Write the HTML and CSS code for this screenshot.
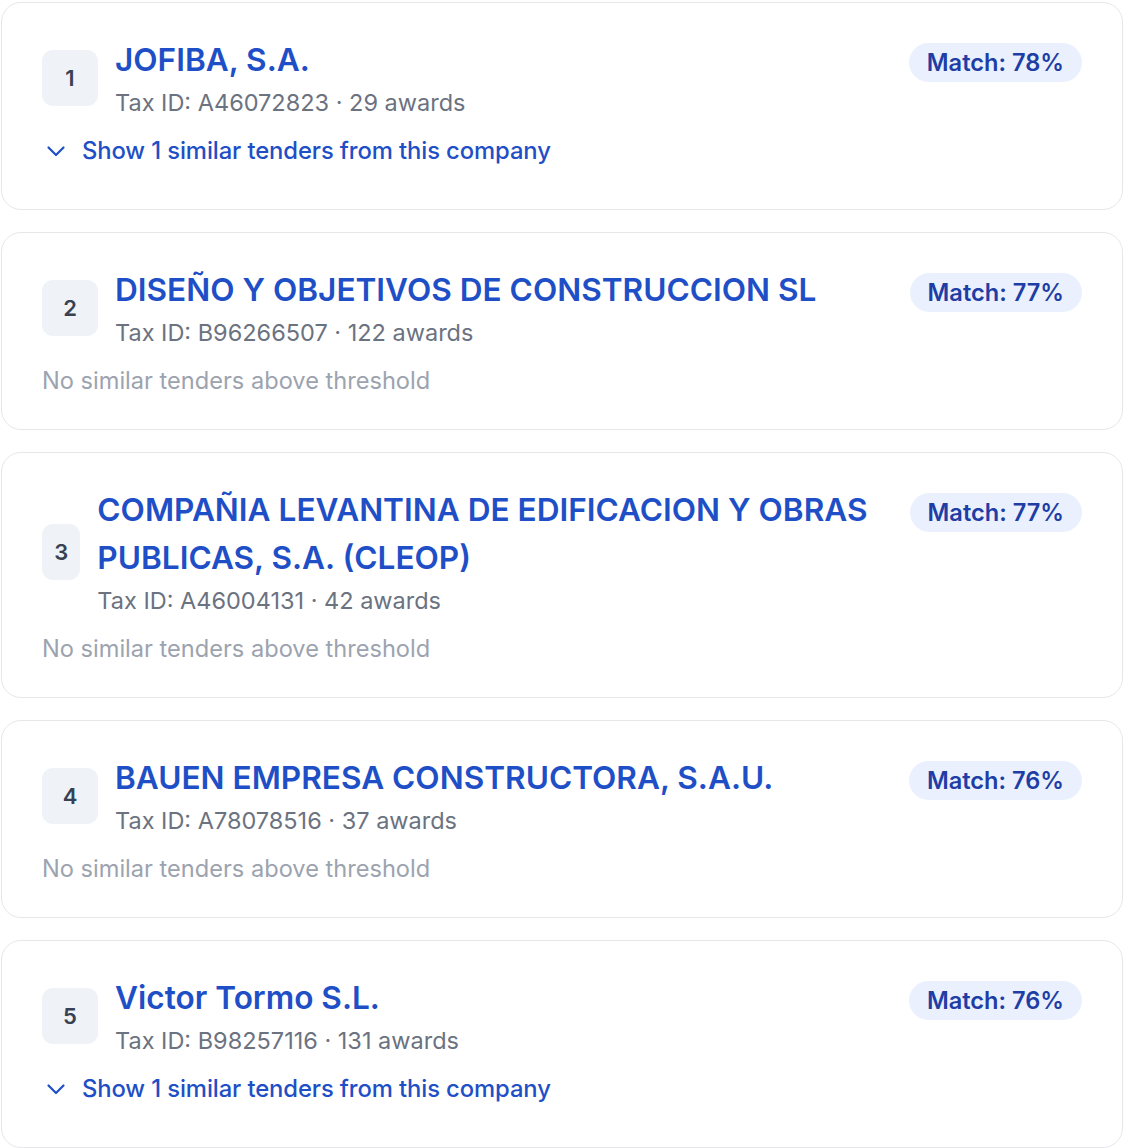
FILE: index.html
```html
<!DOCTYPE html>
<html>

<head>
  <title>Similar Companies</title>
  <link rel="stylesheet" href="styles.css">
</head>

<body>
  <div class="results">

    <div class="company-card">
      <div class="card-head">
        <div class="company-info">
          <span class="rank">1</span>
          <div class="company-text">
            <h2 class="company-name">JOFIBA, S.A.</h2>
            <p class="company-meta">Tax ID: A46072823 · 29 awards</p>
          </div>
        </div>
        <span class="match">Match: 78%</span>
      </div>
      <button class="show-tenders">
        <svg class="chevron" viewBox="0 0 24 24" width="24" height="24"><path d="M4.5 8.5l7.5 7.5 7.5-7.5" /></svg>
        Show 1 similar tenders from this company
      </button>
    </div>

    <div class="company-card">
      <div class="card-head">
        <div class="company-info">
          <span class="rank">2</span>
          <div class="company-text">
            <h2 class="company-name">DISEÑO Y OBJETIVOS DE CONSTRUCCION SL</h2>
            <p class="company-meta">Tax ID: B96266507 · 122 awards</p>
          </div>
        </div>
        <span class="match">Match: 77%</span>
      </div>
      <p class="no-tenders">No similar tenders above threshold</p>
    </div>

    <div class="company-card">
      <div class="card-head">
        <div class="company-info">
          <span class="rank">3</span>
          <div class="company-text">
            <h2 class="company-name">COMPAÑIA LEVANTINA DE EDIFICACION Y OBRAS PUBLICAS, S.A. (CLEOP)</h2>
            <p class="company-meta">Tax ID: A46004131 · 42 awards</p>
          </div>
        </div>
        <span class="match">Match: 77%</span>
      </div>
      <p class="no-tenders">No similar tenders above threshold</p>
    </div>

    <div class="company-card">
      <div class="card-head">
        <div class="company-info">
          <span class="rank">4</span>
          <div class="company-text">
            <h2 class="company-name">BAUEN EMPRESA CONSTRUCTORA, S.A.U.</h2>
            <p class="company-meta">Tax ID: A78078516 · 37 awards</p>
          </div>
        </div>
        <span class="match">Match: 76%</span>
      </div>
      <p class="no-tenders">No similar tenders above threshold</p>
    </div>

    <div class="company-card">
      <div class="card-head">
        <div class="company-info">
          <span class="rank">5</span>
          <div class="company-text">
            <h2 class="company-name">Victor Tormo S.L.</h2>
            <p class="company-meta">Tax ID: B98257116 · 131 awards</p>
          </div>
        </div>
        <span class="match">Match: 76%</span>
      </div>
      <button class="show-tenders">
        <svg class="chevron" viewBox="0 0 24 24" width="24" height="24"><path d="M4.5 8.5l7.5 7.5 7.5-7.5" /></svg>
        Show 1 similar tenders from this company
      </button>
    </div>

  </div>
</body>

</html>
```

FILE: styles.css
```css
body {
  font-family: Inter, "Noto Sans", sans-serif;
  margin: 0;
  padding: 0;
  background-color: #fff;
}

.results {
  display: flex;
  flex-direction: column;
  gap: 22px;
  padding: 2px 1px 0 1px;
}

.company-card {
  background-color: #fff;
  border: 1px solid #e5e7eb;
  border-radius: 20px;
  padding: 33px 40px 34px 40px;
}

.card-head {
  display: flex;
  justify-content: space-between;
  align-items: flex-start;
  gap: 24px;
}

.company-info {
  display: flex;
  align-items: center;
  gap: 17px;
}

.rank {
  width: 56px;
  height: 56px;
  margin-top: -3px;
  display: flex;
  align-items: center;
  justify-content: center;
  background-color: #eff2f7;
  border-radius: 11px;
  color: #374151;
  font-size: 22px;
  font-weight: 600;
}

.company-name {
  margin: 0;
  font-size: 31.6px;
  line-height: 48px;
  font-weight: 600;
  color: #1f4fc6;
}

.company-meta {
  margin: 0;
  font-size: 23.5px;
  line-height: 38px;
  color: #6b7280;
}

.match {
  flex-shrink: 0;
  white-space: nowrap;
  margin-top: 7px;
  padding: 5px 18px;
  line-height: 29px;
  font-size: 23.6px;
  font-weight: 600;
  color: #1e3ea6;
  background-color: #eaf0fd;
  border-radius: 999px;
}

.show-tenders {
  display: flex;
  align-items: center;
  gap: 14px;
  margin-top: 5px;
  padding: 10px 0;
  border: none;
  background: none;
  font-family: inherit;
  font-size: 23.8px;
  line-height: 28px;
  font-weight: 500;
  letter-spacing: -0.1px;
  color: #1f4fc6;
  cursor: pointer;
}

.chevron {
  fill: none;
  stroke: #1f4fc6;
  stroke-width: 2.2;
  stroke-linecap: round;
  stroke-linejoin: round;
  margin-left: 2px;
}

.no-tenders {
  margin: 15px 0 0 0;
  font-size: 23.6px;
  line-height: 28px;
  color: #9ca3af;
}
```
